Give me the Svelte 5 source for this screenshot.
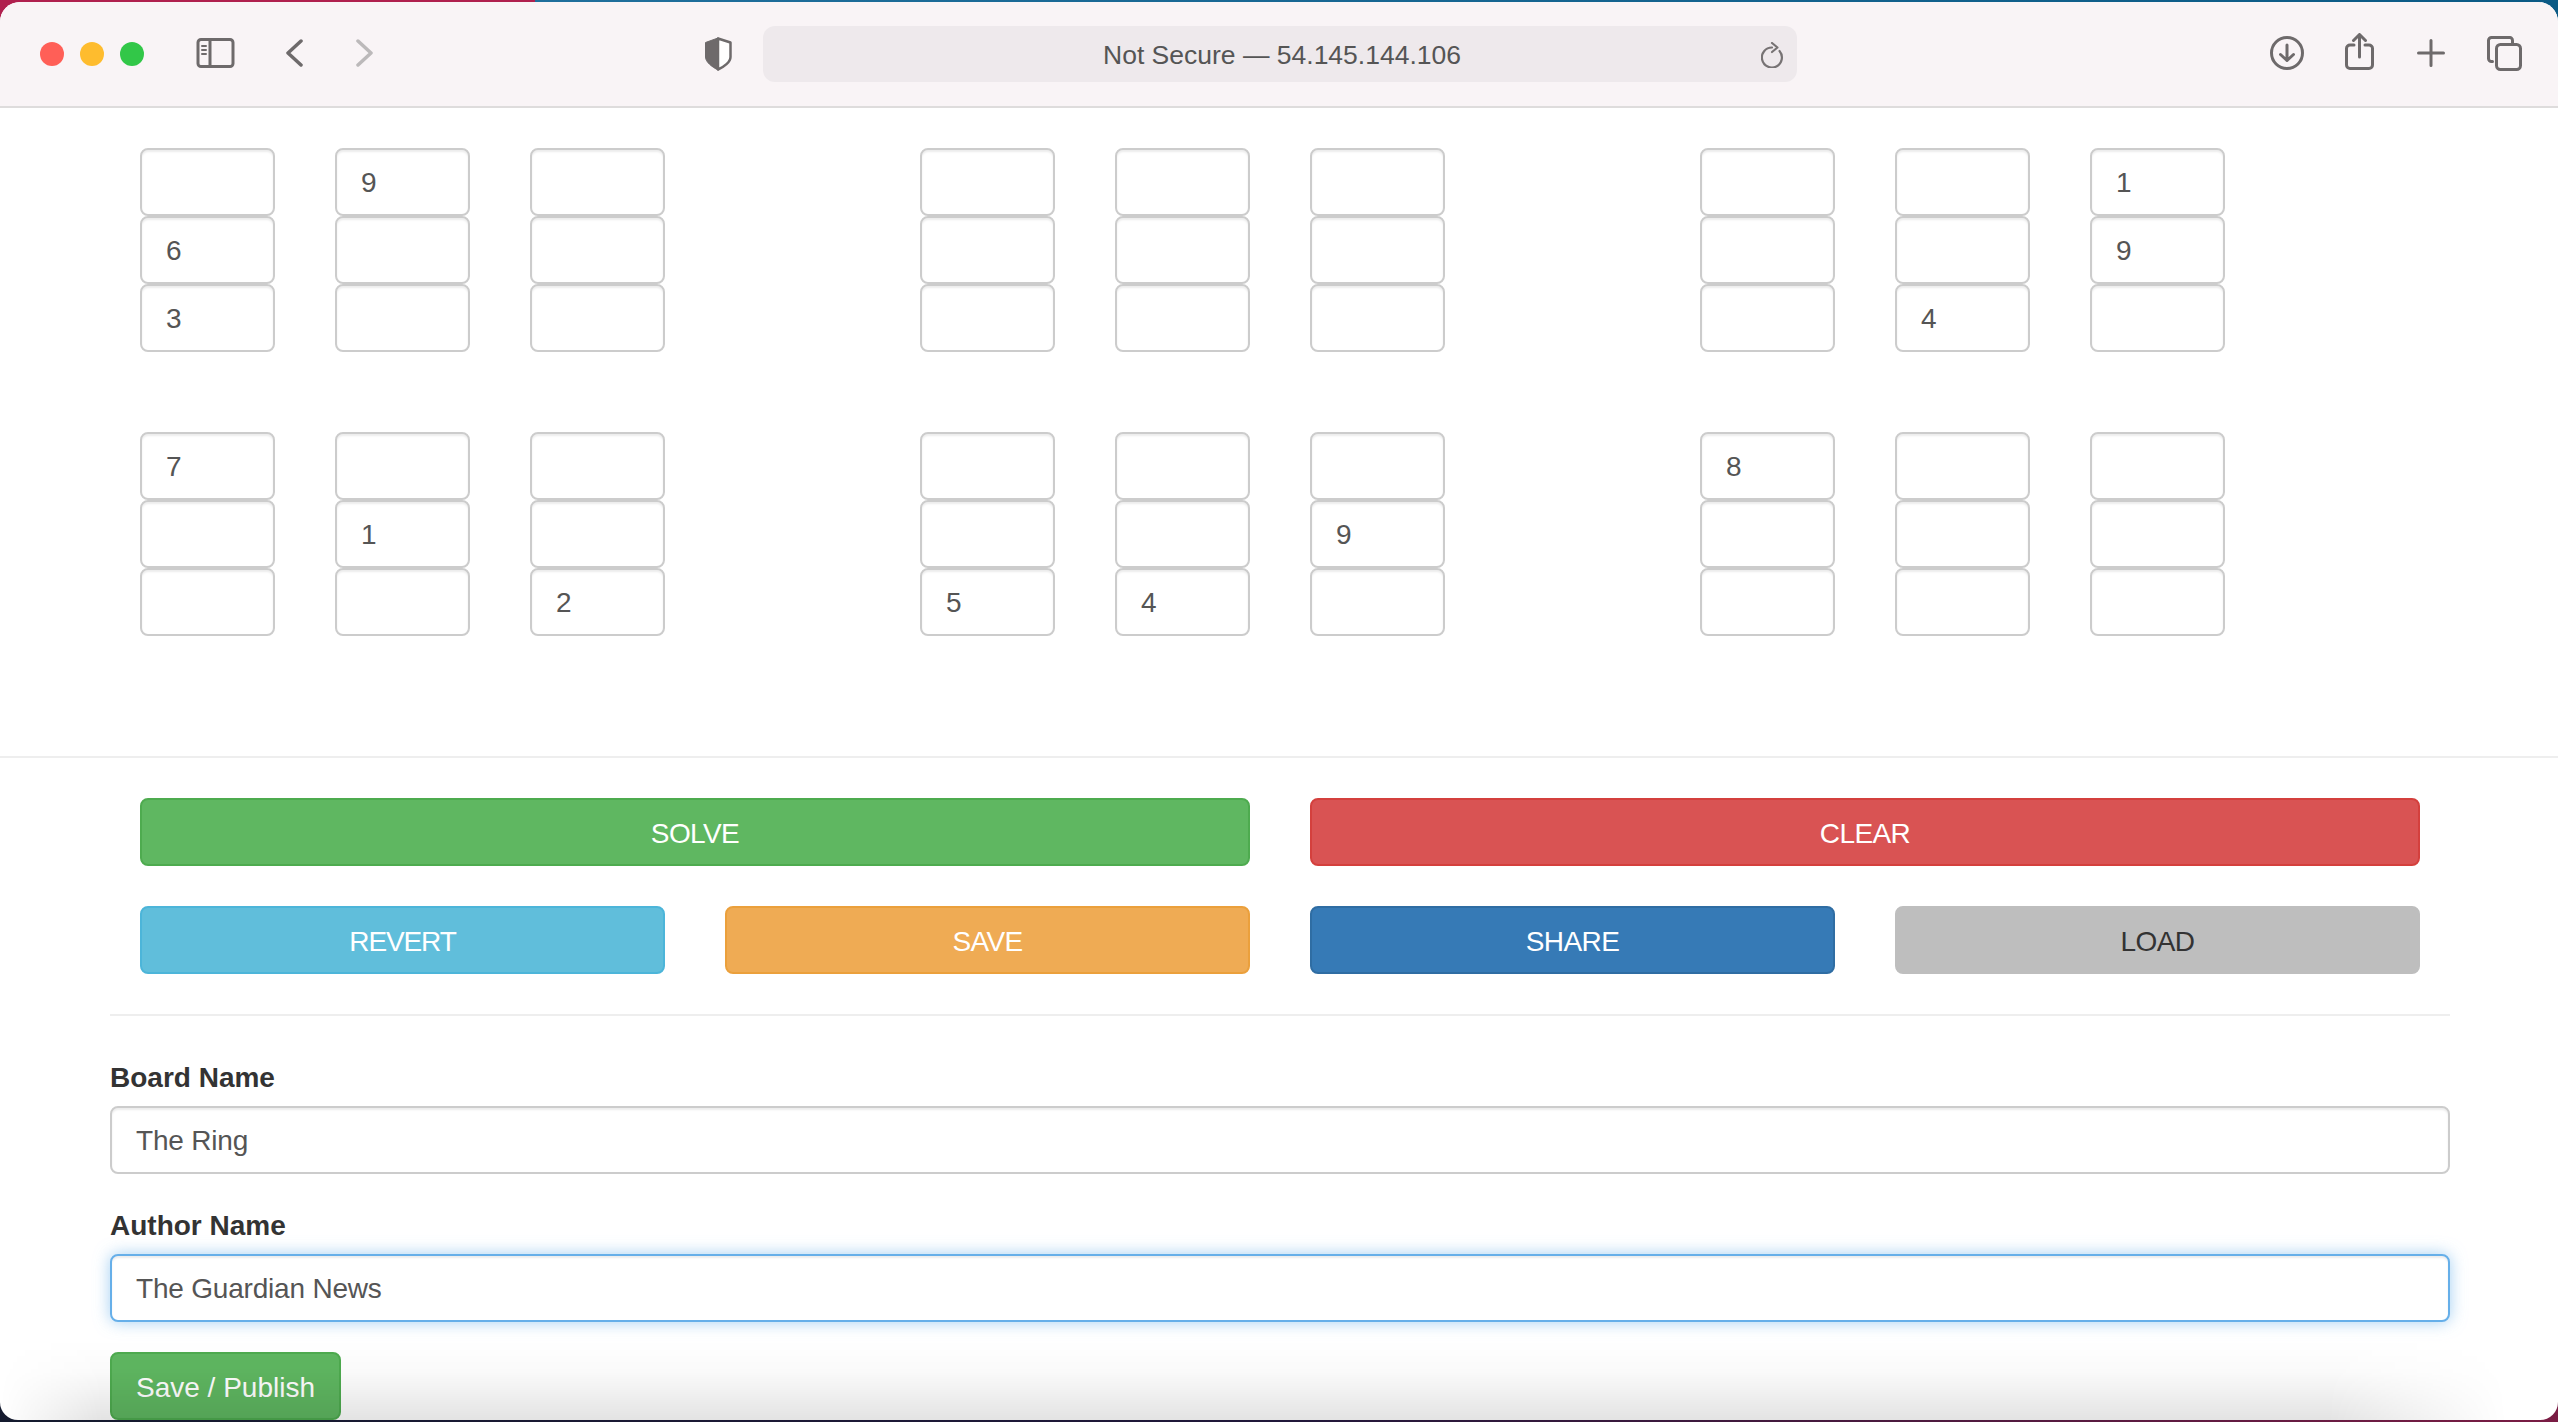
<script lang="ts">
type Group = (string | number)[][];

// two rows of three 3x3 blocks, listed row by row
const boards: Group[] = [
  [["", 9, ""], [6, "", ""], [3, "", ""]],
  [["", "", ""], ["", "", ""], ["", "", ""]],
  [["", "", 1], ["", "", 9], ["", 4, ""]],
  [[7, "", ""], ["", 1, ""], ["", "", 2]],
  [["", "", ""], ["", "", 9], [5, 4, ""]],
  [[8, "", ""], ["", "", ""], ["", "", ""]],
];

const smallButtons = [
  { label: "REVERT", kind: "info" },
  { label: "SAVE", kind: "warning" },
  { label: "SHARE", kind: "primary" },
  { label: "LOAD", kind: "load" },
];
</script>

<div class="window">
  <header class="toolbar">
    <span class="light red"></span>
    <span class="light yellow"></span>
    <span class="light green"></span>

    <svg class="ic sidebar" width="39" height="30" viewBox="0 0 39 30">
      <rect x="2" y="1.500" width="35" height="27" rx="3" />
      <path d="M14 1.500V28.500" />
      <path class="thin" d="M6 8H10M6 12H10M6 16H10" />
    </svg>
    <svg class="ic back" width="17" height="28" viewBox="0 0 17 28">
      <path d="M15 2L2 14L15 26" />
    </svg>
    <svg class="ic forward" width="17" height="28" viewBox="0 0 17 28">
      <path d="M2 2L15 14L2 26" />
    </svg>
    <svg class="ic shield" width="28" height="34" viewBox="0 0 28 34">
      <path class="white" d="M14 1.500L26.500 5.500V20C26.500 25 20 30 14 32.500Z" />
      <path class="solid" d="M14 1L1.500 5.500V20C1.500 25 8 30 14 33Z" />
    </svg>

    <div class="url">
      <span>Not Secure — 54.145.144.106</span>
      <svg class="reload" width="23" height="26" viewBox="0 0 23 26">
        <path d="M11 5.500A10 10 0 1 0 18.500 9" />
        <path d="M11 1L16.500 5.500L11 10" />
      </svg>
    </div>

    <svg class="ic download" width="34" height="34" viewBox="0 0 34 34">
      <circle cx="17" cy="17" r="15.500" />
      <path d="M17 9V24.500M10.500 18.500L17 24.500L23.500 18.500" />
    </svg>
    <svg class="ic share" width="29" height="37" viewBox="0 0 29 37">
      <path d="M9 12H5A3.500 3.500 0 0 0 1.500 15.500V32A3.500 3.500 0 0 0 5 35.500H24A3.500 3.500 0 0 0 27.500 32V15.500A3.500 3.500 0 0 0 24 12H20" />
      <path d="M14.500 24V1.500M8.500 7.500L14.500 1.500L20.500 7.500" />
    </svg>
    <svg class="ic plus" width="28" height="28" viewBox="0 0 28 28">
      <path d="M14 1.500V26.500M1.500 14H26.500" />
    </svg>
    <svg class="ic tabs" width="35" height="35" viewBox="0 0 35 35">
      <rect x="9.500" y="8.500" width="24" height="25" rx="4" />
      <path d="M5.500 25.500H4.500A3 3 0 0 1 1.500 22.500V4.500A3 3 0 0 1 4.500 1.500H22A3 3 0 0 1 25.500 4.500V8" />
    </svg>
  </header>

  <main>
    <section class="board">
      {#each boards as group}
        <div class="block">
          {#each group as row}
            <div class="cells">
              {#each row as value}
                <input class="field" type="text" readonly {value} />
              {/each}
            </div>
          {/each}
        </div>
      {/each}
    </section>

    <hr class="wide" />

    <section class="actions">
      <button class="btn success">SOLVE</button>
      <button class="btn danger">CLEAR</button>
      <div class="small-row">
        {#each smallButtons.slice(0, 2) as b}
          <button class="btn {b.kind}">{b.label}</button>
        {/each}
      </div>
      <div class="small-row">
        {#each smallButtons.slice(2) as b}
          <button class="btn {b.kind}">{b.label}</button>
        {/each}
      </div>
    </section>

    <form class="meta">
      <hr />
      <label for="board-name">Board Name</label>
      <input id="board-name" class="field" type="text" value="The Ring" />
      <label for="author-name">Author Name</label>
      <input id="author-name" class="field focused" type="text" value="The Guardian News" />
      <button type="button" class="btn success publish">Save / Publish</button>
    </form>
  </main>

  <div class="bottom-shade"></div>
</div>

<style>
  :global(html),
  :global(body) {
    margin: 0;
    height: 100%;
    overflow: hidden;
  }

  :global(body) {
    background:
      linear-gradient(90deg, #b0204e 0 535px, #1f6f9c 535px, #0b5a85 100%) top / 100% 50% no-repeat,
      linear-gradient(90deg, #141a2e 0, #20183a 50%, #7a1c44 100%) bottom / 100% 50% no-repeat;
  }

  .window {
    position: relative;
    box-sizing: border-box;
    width: 2558px;
    height: 1418px;
    margin-top: 2px;
    background: #fff;
    border-radius: 20px 20px 18px 18px;
    overflow: hidden;
    font-family: "Liberation Sans", Arial, sans-serif;
    font-size: 28px;
    color: #333;
  }

  .toolbar {
    display: flex;
    align-items: center;
    box-sizing: border-box;
    height: 106px;
    padding-left: 40px;
    background: #f9f4f6;
    border-bottom: 2px solid #dedcdc;
  }

  .light {
    width: 24px;
    height: 24px;
    border-radius: 50%;
    margin-right: 16px;
  }
  .red { background: #ff5f57; }
  .yellow { background: #febc2e; }
  .green { background: #32c748; margin-right: 0; }

  .ic {
    flex: none;
    margin-bottom: 2px;
    fill: none;
    stroke: #6e6a6b;
    stroke-width: 3;
    stroke-linecap: round;
    stroke-linejoin: round;
  }
  .ic .thin { stroke-width: 2; }
  .ic .solid { fill: #6e6a6b; stroke: #6e6a6b; stroke-width: 1; }
  .ic .white { fill: #fff; stroke: #6e6a6b; stroke-width: 2.500; }

  .sidebar { margin-left: 52px; }
  .back { margin-left: 51px; stroke-width: 3.500; }
  .forward { margin-left: 53px; stroke: #bcb9ba; stroke-width: 3.500; }
  .shield { margin-left: 331px; margin-bottom: 0; }
  .download { margin-left: 473px; }
  .share { margin-left: 41px; margin-bottom: 6px; }
  .plus { margin-left: 43px; margin-bottom: 3px; }
  .tabs { margin-left: 42px; }

  .url {
    position: relative;
    flex: none;
    display: flex;
    align-items: center;
    justify-content: center;
    box-sizing: border-box;
    width: 1034px;
    height: 56px;
    margin-left: 31px;
    padding: 3px 0 0 4px;
    background: #eee9ec;
    border-radius: 12px;
    font-size: 26.500px;
    color: #555;
  }

  .reload {
    position: absolute;
    right: 13px;
    top: 16px;
    fill: none;
    stroke: #777374;
    stroke-width: 2.200;
    stroke-linecap: round;
    stroke-linejoin: round;
  }

  .board {
    display: grid;
    grid-template-columns: repeat(3, 720px);
    column-gap: 60px;
    row-gap: 80px;
    padding: 40px 140px 120px;
  }

  .block {
    display: grid;
    grid-template-rows: repeat(3, 68px);
  }

  .cells {
    display: grid;
    grid-template-columns: repeat(3, 135px);
    column-gap: 60px;
  }

  .field {
    display: block;
    box-sizing: border-box;
    width: 100%;
    height: 68px;
    padding: 13px 24px 11px;
    font: inherit;
    letter-spacing: -0.2px;
    color: #555;
    background: #fff;
    border: 2px solid #ccc;
    border-radius: 8px;
    box-shadow: inset 0 2px 2px rgba(0, 0, 0, 0.075);
    outline: none;
  }

  .focused {
    border-color: #66afe9;
    box-shadow: inset 0 2px 2px rgba(0, 0, 0, 0.075), 0 0 16px rgba(102, 175, 233, 0.6);
  }

  hr {
    height: 2px;
    margin: 0;
    border: 0;
    background: #eee;
  }

  .actions {
    display: grid;
    grid-template-columns: 1110px 1110px;
    column-gap: 60px;
    row-gap: 40px;
    padding: 40px 140px;
  }

  .small-row {
    display: grid;
    grid-template-columns: 1fr 1fr;
    column-gap: 60px;
  }

  .btn {
    box-sizing: border-box;
    height: 68px;
    padding: 14px 24px 10px;
    font: inherit;
    letter-spacing: -0.6px;
    color: #fff;
    border: 2px solid transparent;
    border-radius: 8px;
  }
  .success { background: #5fb761; border-color: #4eab4f; }
  .danger { background: #d95353; border-color: #d4403d; }
  .info { background: #60bedb; border-color: #4cb5d9; letter-spacing: -1.100px; }
  .warning { background: #efab54; border-color: #eba03c; }
  .primary { background: #367ab6; border-color: #2f6da3; }
  .load { background: #bebebe; border-color: #bebebe; color: #333; }

  .meta {
    display: flex;
    flex-direction: column;
    align-items: flex-start;
    padding: 0 108px 0 110px;
  }
  .meta hr { align-self: stretch; margin-bottom: 40px; }
  .meta label {
    line-height: 40px;
    padding-top: 2px;
    margin-bottom: 8px;
    font-weight: 700;
  }
  .meta .field { margin-bottom: 30px; }
  .publish { letter-spacing: 0; }

  .bottom-shade {
    position: absolute;
    left: 0;
    right: 0;
    bottom: 0;
    height: 80px;
    background: linear-gradient(rgba(0, 0, 0, 0), rgba(0, 0, 0, 0.02) 40%, rgba(0, 0, 0, 0.11));
    -webkit-mask-image: linear-gradient(90deg, transparent 0, #000 4%, #000 91%, transparent 98%);
    mask-image: linear-gradient(90deg, transparent 0, #000 4%, #000 91%, transparent 98%);
    pointer-events: none;
  }
</style>
